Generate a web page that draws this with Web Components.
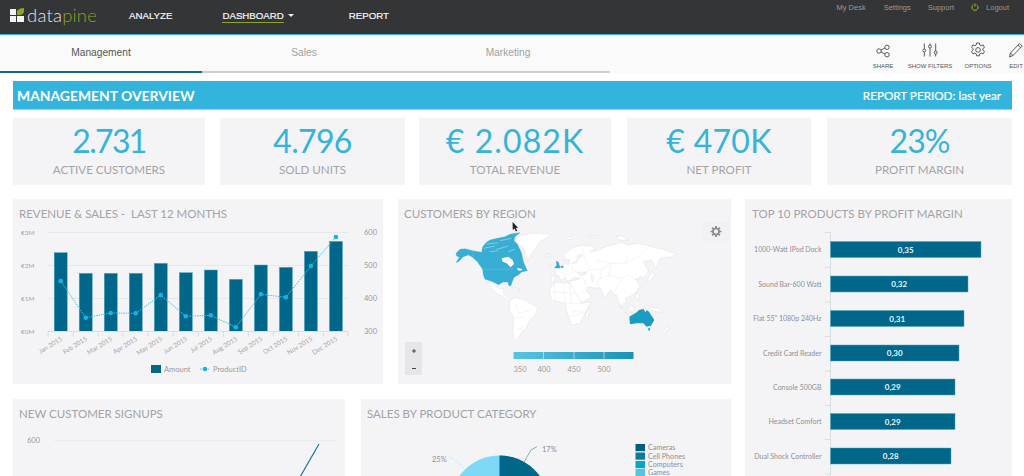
<!DOCTYPE html>
<html lang="en">
<head>
<meta charset="UTF-8">
<title>datapine Management Overview</title>
<style>
    html, body { margin: 0; height: 476px; overflow: hidden; background: #fff; }
    body { font-family: Lato, "Liberation Sans", sans-serif; }
</style>
</head>
<body>
<dp-topbar></dp-topbar>
<dp-tabbar>
    <dp-tab active style="width:202px">Management</dp-tab>
    <dp-tab>Sales</dp-tab>
    <dp-tab>Marketing</dp-tab>
    <dp-tool slot="tools" label="SHARE" icon="share" style="width:20px;margin-left:0"></dp-tool>
    <dp-tool slot="tools" label="SHOW FILTERS" icon="filters" style="width:46px;margin-left:14px"></dp-tool>
    <dp-tool slot="tools" label="OPTIONS" icon="gear" style="width:28px;margin-left:11px"></dp-tool>
    <dp-tool slot="tools" label="EDIT" icon="pencil" style="width:14px;margin-left:17px"></dp-tool>
</dp-tabbar>
<dp-dashboard>
    <dp-banner slot="banner">
        <span>MANAGEMENT OVERVIEW</span>
        <span slot="right">REPORT PERIOD: last year</span>
    </dp-banner>
    <dp-kpi slot="kpi" value="2.731" label="ACTIVE CUSTOMERS" style="width:192px;--track:-1.7px"></dp-kpi>
    <dp-kpi slot="kpi" value="4.796" label="SOLD UNITS" style="width:185px;margin-left:15px;--track:-.7px"></dp-kpi>
    <dp-kpi slot="kpi" value="€ 2.082K" label="TOTAL REVENUE" style="width:192px;margin-left:14px;--track:1.1px"></dp-kpi>
    <dp-kpi slot="kpi" value="€ 470K" label="NET PROFIT" style="width:184px;margin-left:16px;--track:.3px"></dp-kpi>
    <dp-kpi slot="kpi" value="23%" label="PROFIT MARGIN" style="width:185px;margin-left:16px;--track:-1px"></dp-kpi>
    <dp-panel slot="row1" heading="REVENUE &amp; SALES -&nbsp; LAST 12 MONTHS" style="width:370px;height:185px"><dp-revenue-chart></dp-revenue-chart></dp-panel>
    <dp-panel slot="row1" heading="CUSTOMERS BY REGION" style="width:333px;height:185px"><dp-world-map></dp-world-map></dp-panel>
    <dp-panel slot="row2" heading="NEW CUSTOMER SIGNUPS" style="width:332px;height:77px"><dp-signups-chart></dp-signups-chart></dp-panel>
    <dp-panel slot="row2" heading="SALES BY PRODUCT CATEGORY" style="width:370px;height:77px"><dp-category-pie></dp-category-pie></dp-panel>
    <dp-panel slot="side" heading="TOP 10 PRODUCTS BY PROFIT MARGIN" style="width:267px;height:277px;--title-x:7px"><dp-top-products></dp-top-products></dp-panel>
</dp-dashboard>

<script>
    function shadow(el, html) {
        el.attachShadow({mode: 'open'}).innerHTML = html;
    }

    class DpTopbar extends HTMLElement {
        constructor() {
            super();
            shadow(this, `
                <style>
                    :host { display: flex; height: 34px; background: #333536; border-bottom: 1px solid #3ab2e2; font-family: "Liberation Sans", sans-serif; }
                    .logo { display: flex; align-items: center; margin-left: 10px; width: 119px; height: 30px; }
                    .logo b { font: 300 18.5px Lato, sans-serif; color: #e4e4e4; margin-left: 3px; letter-spacing: .2px; }
                    .logo i { font-style: normal; color: #8ba61f; }
                    nav { display: flex; height: 30px; align-items: center; font-size: 9.7px; color: #f6f6f6; -webkit-text-stroke: .2px #f6f6f6; }
                    nav span { display: block; }
                    .dash { margin: 1px 0 0 50px; border-bottom: 1px solid #8ba61f; padding: 1px 0; }
                    .caret { width: 0; height: 0; margin: 0 0 0 4px; border: 3px solid transparent; border-top: 3px solid #eee; border-bottom: 0; }
                    .report { margin-left: 55px; }
                    .meta { margin-left: auto; display: flex; align-items: flex-start; padding: 3px 15px 0 0; font-size: 7.5px; color: #9a9a9a; }
                    .meta svg { margin: 0 0 0 17px; }
                </style>
                <div class="logo">
                    <svg width="14" height="14" viewBox="0 0 14 14"><path fill="#f4f4f4" d="M0 1h6v6H0zM0 8h6v6H0zM7 8h7v6H7z"/><path fill="#8ba61f" d="M7 7V3Q9 0 14 0V3Q14 7 9 7z"/></svg>
                    <b>data<i>pine</i></b>
                </div>
                <nav>
                    <span>ANALYZE</span>
                    <span class="dash">DASHBOARD</span><span class="caret"></span>
                    <span class="report">REPORT</span>
                </nav>
                <div class="meta">
                    <span>My Desk</span><span style="margin-left:18px">Settings</span><span style="margin-left:17px">Support</span>
                    <svg width="8" height="8" viewBox="0 0 8 8" fill="none" stroke="#9dbb22" stroke-width="1"><path d="M2.4 1.8a3 3 0 1 0 3.2 0M4 .5v3"/></svg>
                    <span style="margin-left:7px">Logout</span>
                </div>`);
        }
    }

    class DpTab extends HTMLElement {
        constructor() {
            super();
            shadow(this, `
                <style>
                    :host { display: block; width: 204px; height: 38px; box-sizing: border-box; text-align: center; padding-top: 12px; font: 10.2px "Liberation Sans", sans-serif; color: #a2a2a2; border-bottom: 2px solid #cfcfcf; }
                    :host([active]) { color: #555; border-bottom-color: #0e6a8a; }
                </style><slot></slot>`);
        }
    }

    class DpTabbar extends HTMLElement {
        constructor() {
            super();
            shadow(this, `
                <style>
                    :host { display: flex; height: 38px; background: #fafafa; }
                    .tabs { display: flex; height: 38px; width: 610px; }
                    .tools { display: flex; margin-left: auto; padding-right: 1px; }
                </style>
                <div class="tabs"><slot></slot></div>
                <div class="tools"><slot name="tools"></slot></div>`);
        }
    }

    const TOOL_ICONS = {
        share: '<circle cx="4" cy="9" r="2.2"/><circle cx="12" cy="5.3" r="2.2"/><circle cx="12" cy="12.7" r="2.2"/><path d="M6 8l4-2M6 10l4 2"/>',
        filters: '<path d="M2.3 1.5v13M8 1.5v13M13.7 1.5v13"/><circle cx="2.3" cy="8.5" r="1.5" fill="#fafafa"/><circle cx="8" cy="4.5" r="1.5" fill="#fafafa"/><circle cx="13.7" cy="10.5" r="1.5" fill="#fafafa"/>',
        gear: '<path d="M6.6 1h2.8l.4 2 1.4.7 1.9-.8 1.4 2.4-1.6 1.3v1.6l1.6 1.3-1.4 2.4-1.9-.8-1.4.7-.4 2H6.6l-.4-2-1.4-.7-1.9.8L1.5 9.5l1.6-1.3V6.6L1.5 5.3l1.4-2.4 1.9.8 1.4-.7z"/><circle cx="8" cy="7.9" r="2.3"/>',
        pencil: '<path d="M1.5 15l1-4L11.5 1.5l2.7 2.5L5 13.5zM2.5 11L5 13.5M10 3l2.7 2.6"/>'
    };

    class DpTool extends HTMLElement {
        constructor() {
            super();
            shadow(this, `
                <style>
                    :host { display: flex; flex-direction: column; align-items: center; font: 6px "Liberation Sans", sans-serif; color: #555; white-space: nowrap; padding-top: 7px; }
                    svg { display: block; fill: none; stroke: #4a4a4a; stroke-width: .9; }
                    span { margin-top: 4px; line-height: 8px; }
                </style>
                <svg width="16" height="16" viewBox="0 0 16 16">${TOOL_ICONS[this.getAttribute('icon')]}</svg>
                <span>${this.getAttribute('label')}</span>`);
        }
    }

    class DpDashboard extends HTMLElement {
        constructor() {
            super();
            shadow(this, `
                <style>
                    :host { display: block; padding: 8px 12px 0 13px; }
                    .kpis { display: flex; margin: 8px 0 14px; }
                    .grid { display: flex; gap: 14px; }
                    .left { display: flex; flex-direction: column; gap: 15px; width: 718px; }
                    .row { display: flex; gap: 15px; }
                    .row.second { gap: 16px; }
                </style>
                <slot name="banner"></slot>
                <div class="kpis"><slot name="kpi"></slot></div>
                <div class="grid">
                    <div class="left">
                        <div class="row"><slot name="row1"></slot></div>
                        <div class="row second"><slot name="row2"></slot></div>
                    </div>
                    <slot name="side"></slot>
                </div>`);
        }
    }

    class DpBanner extends HTMLElement {
        constructor() {
            super();
            shadow(this, `
                <style>
                    :host { display: flex; align-items: center; justify-content: space-between; height: 29px; box-sizing: border-box; padding: 0 11px 0 4px; background: #33b4dc; border-bottom: 1px solid #7fdcf2; color: #fff; font: 700 13.9px Lato, sans-serif; }
                    .right { font-size: 11.7px; font-weight: 400; -webkit-text-stroke: .2px #fff; }
                </style>
                <slot></slot><span class="right"><slot name="right"></slot></span>`);
        }
    }

    class DpKpi extends HTMLElement {
        constructor() {
            super();
            shadow(this, `
                <style>
                    :host { display: block; flex: none; height: 67px; background: #f4f4f6; text-align: center; }
                    .value { font: 400 32px/34px Lato, sans-serif; color: #36b3d9; padding-top: 6px; letter-spacing: var(--track, 0); }
                    .label { font: 400 11.6px/14px Lato, sans-serif; color: #a3a3a6; margin-top: 5px; }
                </style>
                <div class="value">${this.getAttribute('value')}</div>
                <div class="label">${this.getAttribute('label')}</div>`);
        }
    }

    class DpPanel extends HTMLElement {
        constructor() {
            super();
            shadow(this, `
                <style>
                    :host { display: block; flex: none; background: #f4f4f6; }
                    h2 { margin: 0; height: 30px; padding: 7px 0 0 var(--title-x, 6px); box-sizing: border-box; font: 400 11.5px/15px Lato, sans-serif; color: #a3a3a6; white-space: nowrap; }
                </style>
                <h2>${this.getAttribute('heading')}</h2><slot></slot>`);
        }
    }

    const SVG_BASE = `<style>
        :host { display: block; }
        svg { display: block; overflow: hidden; }
        text { font-family: Lato, sans-serif; }
    </style>`;

    class DpRevenueChart extends HTMLElement {
        constructor() {
            super();
            const months = ['Jan', 'Feb', 'Mar', 'Apr', 'May', 'Jun', 'Jul', 'Aug', 'Sep', 'Oct', 'Nov', 'Dec'];
            const tops = [252.7, 273.3, 273.3, 273.3, 263.3, 272.7, 270, 279.3, 265, 267.3, 251.3, 241.3];
            const line = [281, 317.7, 313, 313.3, 295, 316.3, 315.3, 327.3, 294.3, 297.3, 266, 237];
            const xs = months.map((m, i) => 60.7 + i * 25.02);
            const grid = [[232.5, '€3M', '600'], [265.5, '€2M', '500'], [298.5, '€1M', '400'], [331.5, '€0M', '300']];
            let out = '';
            grid.forEach(g => {
                out += `<path d="M48 ${g[0]}H348" stroke="#e8e8ea"/>`;
                out += `<text x="21" y="${g[0] + 2.5}" font-size="6.5" fill="#a5a5a8">${g[1]}</text>`;
                out += `<text x="364" y="${g[0] + 2.5}" font-size="7.5" fill="#999">${g[2]}</text>`;
            });
            xs.forEach((x, i) => {
                out += `<rect x="${x - 6.5}" y="${tops[i]}" width="13" height="${331.5 - tops[i]}" fill="#00668a" stroke="#4fa8c2" stroke-width=".5"/>`;
                out += `<path d="M${x - 12.5} 331.5v5" stroke="#dcdcdf"/>`;
                out += `<text transform="translate(${x + 2} 340) rotate(-32)" text-anchor="end" font-size="6.5" fill="#a5a5a8">${months[i]} 2015</text>`;
            });
            out += `<path d="M348 331.5v5M48 331.5H348" stroke="#dcdcdf"/>`;
            out += `<polyline fill="none" stroke="#45c1e8" stroke-width="1" stroke-dasharray="1.5 1" points="${xs.map((x, i) => x + ',' + line[i]).join(' ')}"/>`;
            xs.forEach((x, i) => { out += `<circle cx="${x}" cy="${line[i]}" r="2.3" fill="#14b4e4"/>`; });
            out += `<rect x="151" y="365" width="10" height="8" fill="#00668a"/><text x="164" y="372" font-size="7.5" fill="#999">Amount</text>`;
            out += `<path d="M200 369H210" stroke="#45c1e8" stroke-dasharray="1.5 1"/><circle cx="205" cy="369" r="2.2" fill="#14b4e4"/><text x="213" y="372" font-size="7.5" fill="#999">ProductID</text>`;
            shadow(this, `${SVG_BASE}<svg width="370" height="155" viewBox="13 229 370 155">${out}</svg>`);
        }
    }

    class DpWorldMap extends HTMLElement {
        constructor() {
            super();
            shadow(this, `${SVG_BASE}
                <style>
                    svg { overflow: visible; }
                    .land { fill: #fff; stroke: #dedee2; stroke-width: 1.5; }
                    .us { fill: #39aed4; stroke: #39aed4; stroke-width: 1; }
                    .cut { fill: none; stroke: #f4f4f6; stroke-width: 1.2; }
                    .inner { fill: none; stroke: #e4e4e8; stroke-width: 1.2; }
                    .blue-line { fill: none; stroke: #6fc6e2; stroke-width: 1; }
                </style>
                <svg width="333" height="155" viewBox="398 229 333 155">
                    <g transform="translate(440 220) scale(.3333)">
                        <path class="land" d="M222 60L240 48 270 40 305 40 332 43 322 52 300 65 290 80 275 100 265 120 258 105 252 88 235 72Z"/>
                        <path class="land" d="M314 105L328 101 332 108 318 111Z"/>
                        <path class="land" d="M142 188L165 192 175 205 192 207 190 222 205 232 214 236 206 242 190 230 170 220 155 205Z"/>
                        <path class="land" d="M212 200L232 205 240 211 226 209Z"/>
                        <path class="land" d="M208 245L225 232 250 238 270 250 294 262 286 285 270 300 258 325 240 345 230 362 222 358 218 330 222 295 208 270Z"/>
                        <path class="inner" d="M222 295L250 290 262 300M228 250L235 280 270 272M232 330L252 322"/>
                        <path class="us" d="M48 100L60 88 75 86 98 92 125 97 128 80 138 68 150 60 172 55 195 50 212 42 240 38 225 50 222 62 232 72 238 85 245 100 250 125 262 152 245 156 235 165 222 172 212 198 206 196 204 186 190 186 175 194 165 188 150 182 135 178 130 165 128 148 112 125 98 112 85 105 70 110 55 125 48 128 58 112 50 108Z"/>
                        <path d="M185 115L205 110 218 120 222 132 212 142 200 130 188 125Z" fill="#fafafb"/>
                        <path class="cut" d="M132 85L165 78M140 72L175 68M170 88L205 78M180 62L215 55M150 95L175 92M205 95L225 88"/>
                        <path class="blue-line" d="M98 92L100 118M130 148H220"/>
                        <path d="M232 143L248 148 240 153 232 149Z" fill="#f4f4f6"/>
                    </g>
                    <g transform="translate(395 195) scale(.3333)">
                        <path class="land" d="M505 180L530 160 560 150 590 153 600 163 585 170 610 165 640 152 680 142 700 150 730 145 770 155 810 165 845 177 825 187 800 187 790 200 783 222 775 205 770 195 745 200 752 212 760 225 755 240 742 248 735 243 732 255 722 250 735 272 725 290 708 303 690 310 697 325 685 325 680 335 670 318 665 300 653 298 650 285 640 292 632 310 620 290 615 278 600 280 580 275 573 285 590 305 565 320 545 326 530 295 522 268 525 258 545 255 555 248 535 248 528 256 515 258 510 245 498 258 490 240 480 245 478 258 470 262 468 245 485 240 478 225 498 215 510 205 520 210 525 195 512 195Z"/>
                        <path class="land" d="M462 285L480 262 525 265 545 300 560 325 588 322 570 355 555 385 530 390 520 365 510 325 470 315Z"/>
                        <path d="M530 205L548 195 545 185 555 178 565 180 548 195 545 205ZM548 232L575 230 570 240 552 240ZM590 235L597 250 592 262 588 250Z" fill="#f4f4f6" stroke="#dedee2"/>
                        <path class="land" d="M578 345L585 340 578 368 570 365Z"/>
                        <path class="land" d="M770 228L778 240 765 258 752 262 762 248Z"/>
                        <path class="land" d="M700 332L720 338 715 352 702 348Z"/>
                        <path class="land" d="M672 330L695 352 688 352Z"/>
                        <path class="land" d="M695 354L735 360 735 364 698 360Z"/>
                        <path class="land" d="M724 292L732 300 730 318 722 308Z"/>
                        <path class="land" d="M760 335L790 340 805 352 785 350 768 345Z"/>
                        <path class="land" d="M800 415L820 392 822 400 805 418Z"/>
                        <path class="land" d="M510 128L530 125 535 132 515 134ZM575 124L612 122 605 128 580 128ZM660 125L680 122 700 135 675 135Z"/>
                        <path class="land" d="M455 182L465 178 468 184 458 187ZM464 212L468 210 468 218 463 218Z"/>
                        <path class="inner" d="M530 205L535 225 520 240 495 232M560 150L572 195 585 225 620 222 650 205 690 205 730 185 760 155M585 225L560 240 535 225M620 222L615 250 600 280M650 205L640 240 680 250 700 240 730 262M640 240L615 250M680 250L655 298M560 240L575 275M478 262L480 315M505 262L510 325M525 265L530 325 510 325M470 290L540 295M530 325L560 325M520 365L560 355M530 350L568 352M600 195L650 205M690 205L700 180"/>
                        <path d="M703 365L725 352 732 345 745 342 752 352 755 345 762 350 778 375 768 392 755 395 745 385 725 385 705 388Z" fill="#1d9cc1"/>
                        <path d="M759 400h7l-2 7h-3z" fill="#1d9cc1"/>
                        <path d="M483 198L490 200 496 218 494 220 478 219 485 210Z" fill="#36a8d0"/>
                        <path d="M497 214L505 212 505 218 498 219Z" fill="#36a8d0"/>
                    </g>
                    <defs><linearGradient id="scale"><stop offset="0" stop-color="#58c4e4"/><stop offset="1" stop-color="#1a93b6"/></linearGradient></defs>
                    <rect x="513.5" y="352" width="120" height="7" fill="url(#scale)"/>
                    <path d="M543.5 352v7M574 352v7M604 352v7" stroke="#cdeaf3" stroke-width=".7"/>
                    <g font-size="7.5" fill="#9a9a9a" text-anchor="middle">
                        <text x="520" y="371.5">350</text><text x="544" y="371.5">400</text><text x="574" y="371.5">450</text><text x="604" y="371.5">500</text>
                    </g>
                    <rect x="405" y="342" width="17" height="33" fill="#e6e6e8"/>
                    <path d="M412 351h4M414 349v4M412 368.5h4" stroke="#444" stroke-width="1"/>
                    <rect x="702" y="222" width="28" height="19" fill="#f1f1f3"/>
                    <g transform="translate(716 231.5) scale(.72)" fill="none" stroke="#8a8a8a">
                        <circle r="4.3" stroke-width="2.6"/>
                        <path stroke-width="2.4" d="M0-7.500V-5M0 5V7.500M-7.500 0H-5M5 0H7.500M-5.300-5.300L-3.600-3.600M3.600 3.600L5.300 5.300M-5.300 5.300L-3.600 3.600M3.600-3.600L5.300-5.300"/>
                    </g>
                    <path d="M512.5 222l.3 8 1.7-1.600 1.500 3 1.300-.6-1.500-2.900 2.300-.2z" fill="#222"/>
                </svg>`);
        }
    }

    class DpTopProducts extends HTMLElement {
        constructor() {
            super();
            const rows = [
                ['1000-Watt IPod Dock', '0,35', 981, 241.5],
                ['Sound Bar-600 Watt', '0,32', 968, 276],
                ['Flat 55" 1080p 240Hz', '0,31', 964, 310.5],
                ['Credit Card Reader', '0,30', 959, 345],
                ['Console 500GB', '0,29', 955, 379],
                ['Headset Comfort', '0,29', 955, 413.5],
                ['Dual Shock Controller', '0,28', 951, 448]
            ];
            let out = '<path d="M830.5 232V476" stroke="#d8dee2"/>';
            [232, 267, 301.5, 336, 370.5, 405, 439, 473.5].forEach(y => { out += `<path d="M825 ${y + .5}h5.5" stroke="#d8dee2"/>`; });
            rows.forEach(r => {
                out += `<text x="821.5" y="${r[3] + 10.5}" text-anchor="end" font-size="7" fill="#8f8f92">${r[0]}</text>`;
                out += `<rect x="830.5" y="${r[3]}" width="${r[2] - 830.5}" height="16" fill="#00668a" stroke="#4fa8c2" stroke-width=".5"/>`;
                out += `<text x="${(830.5 + r[2]) / 2}" y="${r[3] + 11}" text-anchor="middle" font-size="8" font-weight="700" fill="#e8f6fa">${r[1]}</text>`;
            });
            shadow(this, `${SVG_BASE}<svg width="267" height="247" viewBox="745 229 267 247">${out}</svg>`);
        }
    }

    class DpSignupsChart extends HTMLElement {
        constructor() {
            super();
            shadow(this, `${SVG_BASE}
                <svg width="332" height="47" viewBox="13 429 332 47">
                    <path d="M54 440.5H335" stroke="#ebebed"/>
                    <text x="27" y="443" font-size="7.5" fill="#999">600</text>
                    <path d="M319 444L296 484" fill="none" stroke="#1a7a9a" stroke-width="1.2"/>
                </svg>`);
        }
    }

    class DpCategoryPie extends HTMLElement {
        constructor() {
            super();
            const legend = [['Cameras', '#005f7f', 444], ['Cell Phones', '#0a7a9e', 452.5], ['Computers', '#03a4cf', 461], ['Games', '#55c4e4', 469]];
            const items = legend.map(l => `<rect x="635.5" y="${l[2]}" width="9.5" height="7.2" fill="${l[1]}"/><text x="648" y="${l[2] + 6}" font-size="7.2" fill="#8f8f92">${l[0]}</text>`).join('');
            shadow(this, `${SVG_BASE}
                <svg width="370" height="47" viewBox="361 429 370 47">
                    <circle cx="499.5" cy="505" r="49.5" fill="#7ed9f6"/>
                    <path d="M499.5 505V455.5A49.5 49.5 0 0 1 543 529Z" fill="#00668a"/>
                    <path d="M524 462L531 450 537 446.5" fill="none" stroke="#5d8ea0" stroke-width=".7"/>
                    <path d="M449 456.5L457 461 464 469" fill="none" stroke="#bfe8f5" stroke-width=".7"/>
                    <text x="542" y="452" font-size="7.5" fill="#8f8f92">17%</text>
                    <text x="432" y="462" font-size="7.5" fill="#8f8f92">25%</text>
                    ${items}
                </svg>`);
        }
    }

    customElements.define('dp-topbar', DpTopbar);
    customElements.define('dp-tab', DpTab);
    customElements.define('dp-tabbar', DpTabbar);
    customElements.define('dp-tool', DpTool);
    customElements.define('dp-dashboard', DpDashboard);
    customElements.define('dp-banner', DpBanner);
    customElements.define('dp-kpi', DpKpi);
    customElements.define('dp-panel', DpPanel);
    customElements.define('dp-revenue-chart', DpRevenueChart);
    customElements.define('dp-world-map', DpWorldMap);
    customElements.define('dp-top-products', DpTopProducts);
    customElements.define('dp-signups-chart', DpSignupsChart);
    customElements.define('dp-category-pie', DpCategoryPie);
</script>
</body>
</html>
